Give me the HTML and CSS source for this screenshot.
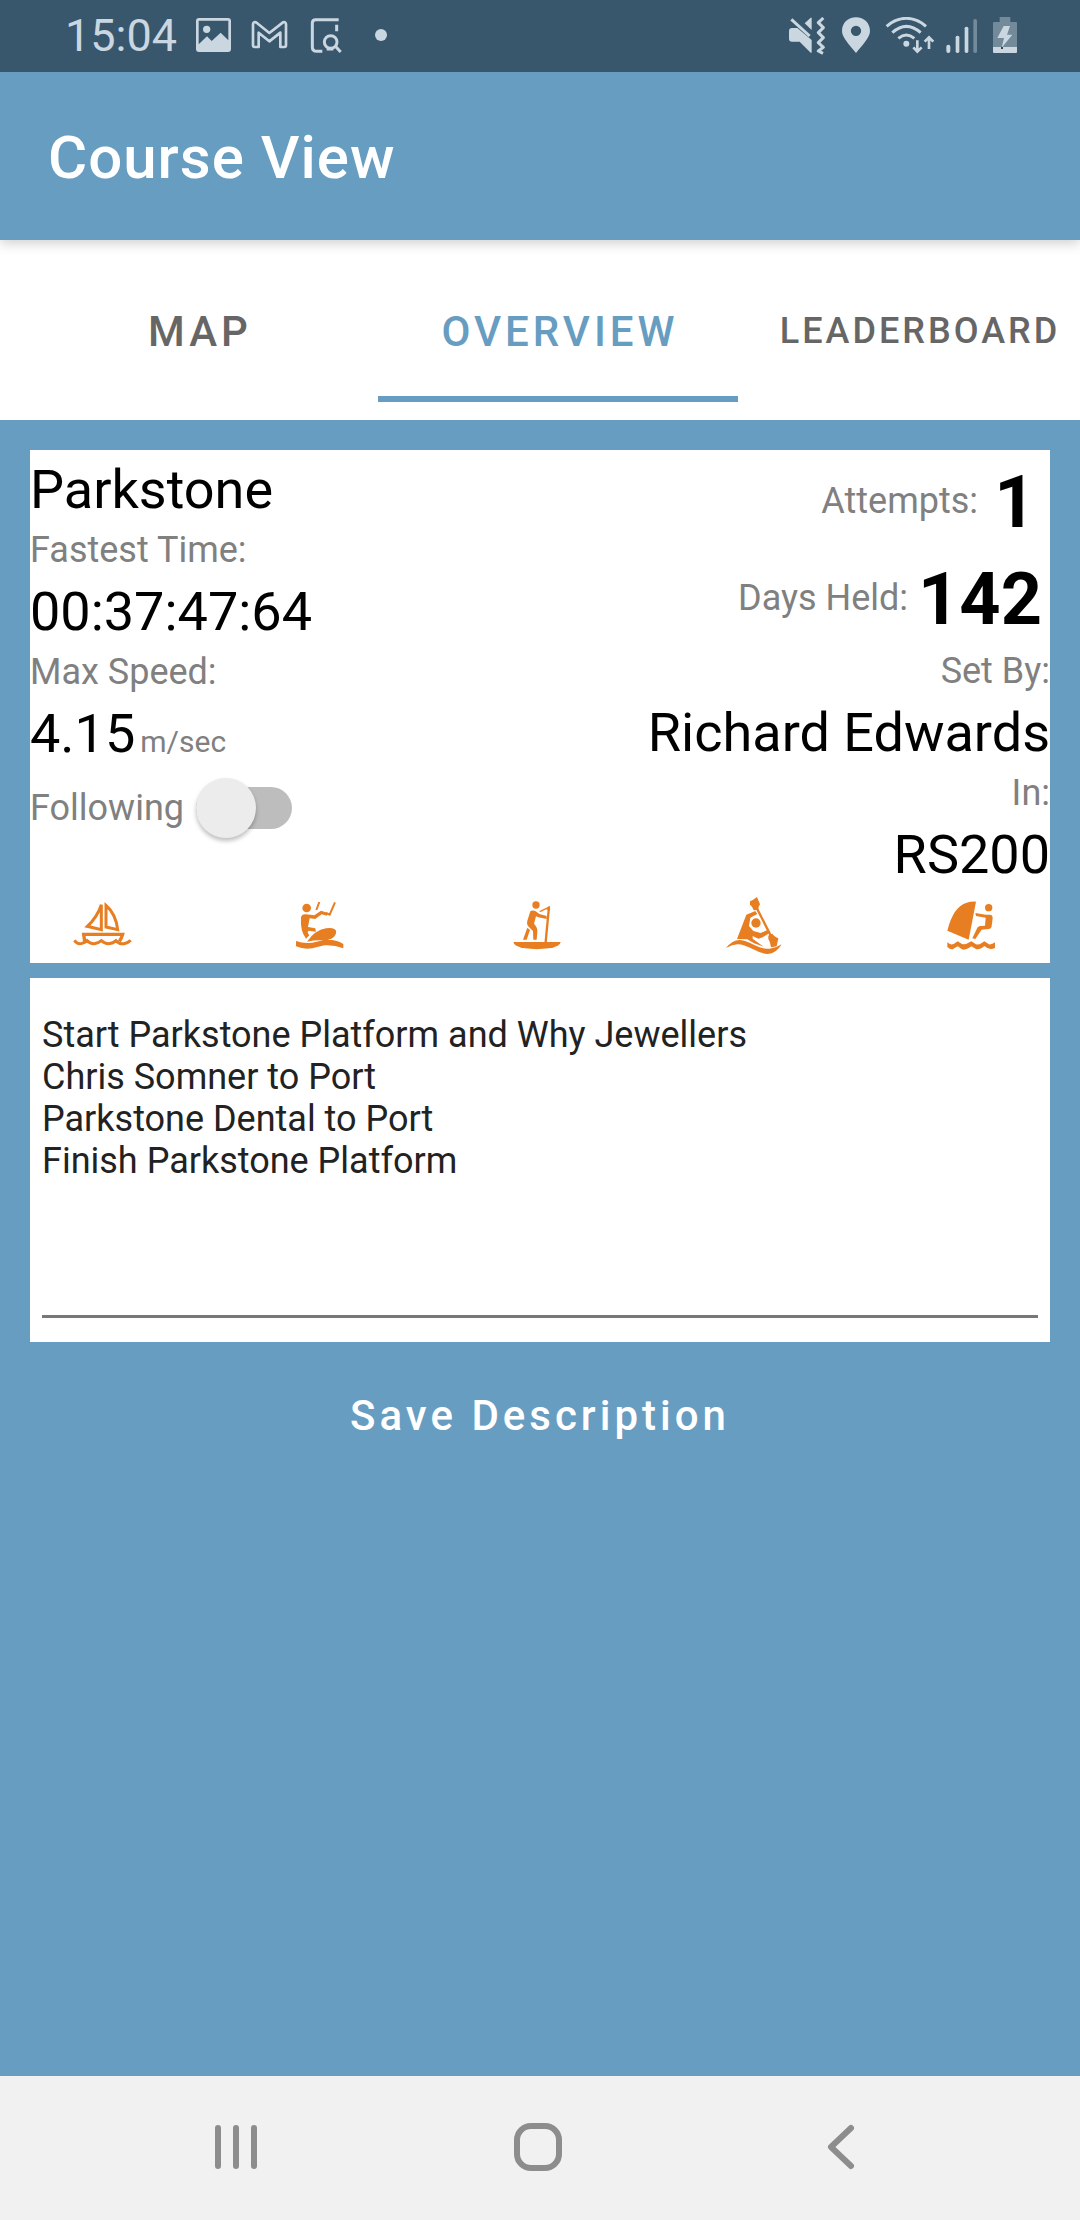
FILE: index.html
```html
<!DOCTYPE html>
<html lang="en">
<head>
<meta charset="utf-8">
<meta name="viewport" content="width=device-width, initial-scale=1">
<title>Course View</title>
<link rel="stylesheet" href="styles.css">
</head>
<body>
<div class="status-bar">
  <div class="status-left">
    <span class="clock">15:04</span>
    <svg class="status-icon" viewBox="582 51 114 114" aria-hidden="true">
      <path fill-rule="evenodd" d="M594 54h87q9 0 9 9v84q0 9-9 9h-87q-9 0-9-9V63q0-9 9-9zM593 62v71l25-24 14 14 27-25 23 23V62z"/>
      <circle cx="617" cy="88" r="11"/>
    </svg>
    <svg class="status-icon" viewBox="753 51 114 114" aria-hidden="true">
      <path class="line" stroke-width="8" stroke-linejoin="round" d="M759 73q0-8 9-6l40 32 41-32q9-2 9 6v63q0 5-5 5h-12V98l-33 26-32-26v43h-12q-5 0-5-5z"/>
    </svg>
    <svg class="status-icon" viewBox="924 51 114 114" aria-hidden="true">
      <path class="line" stroke-width="9" d="M1019 59h-69q-10 0-10 10v72q0 13 13 13h17M1013 74v20"/>
      <circle class="line" stroke-width="9" cx="995" cy="126" r="19"/>
      <path class="line" stroke-width="9" d="M983 147h20M1008 137l17 19"/>
    </svg>
    <svg class="status-icon" viewBox="1095 51 114 114" aria-hidden="true">
      <circle cx="1149" cy="105" r="18"/>
    </svg>
  </div>
  <div class="status-right">
    <svg class="status-icon w42" viewBox="78 51 126 114" aria-hidden="true">
      <path d="M84 93q0-9 9-9h16l43 36v38h-3l-33-33H93q-9 0-9-9zM131 70l18-17h3v37z"/>
      <path class="line" stroke-width="9" d="M91 58l55 50"/>
      <path class="line" stroke-width="9" stroke-linejoin="round" d="M187 54l-15 14 15 15-15 15 15 15-15 15 15 14-15 11 14 7"/>
    </svg>
    <svg class="status-icon" viewBox="228 51 114 114" aria-hidden="true">
      <path fill-rule="evenodd" d="M285 52c24 0 42 17 42 41 0 21-25 44-42 66-17-22-42-45-42-66 0-24 18-41 42-41zm0 25a15 15 0 1 0 0 31 15 15 0 0 0 0-31z"/>
    </svg>
    <svg class="status-icon w52" viewBox="366 51 156 114" aria-hidden="true">
      <path class="line" stroke-width="9" d="M377 79Q404 55 436 55T495 79M394 98q42-38 85 0M412 115q24-20 48 0"/>
      <circle cx="436" cy="131" r="9"/>
      <path class="line" stroke-width="8" d="M469 121v32M457 142l12 13 13-13M504 147v-33M491 125l13-13 13 13"/>
    </svg>
    <svg class="status-icon" viewBox="546 51 114 114" aria-hidden="true">
      <rect x="556" y="134" width="12" height="25" rx="6"/>
      <rect x="584" y="107" width="11" height="52" rx="5"/>
      <rect x="611" y="80" width="11" height="79" rx="5"/>
      <rect x="637" y="57" width="11" height="102" rx="5" opacity=".4"/>
    </svg>
    <svg class="status-icon w32" viewBox="684 51 96 114" aria-hidden="true">
      <path opacity=".4" d="M716 51h32v15h17q3 0 3 3v72h-72V69q0-3 3-3h17z"/>
      <path d="M696 141h72v15q0 3-3 3h-66q-3 0-3-3z"/>
      <path d="M728 78h19l-9 26h16l-32 39 7-29h-20z"/>
      <circle class="dark" cx="723" cy="144" r="3"/>
    </svg>
  </div>
</div>

<header class="app-bar">
  <h1 class="app-title">Course View</h1>
</header>

<nav class="tabs" aria-label="Course sections">
  <button type="button" class="tab">MAP</button>
  <button type="button" class="tab tab-active" aria-current="page">OVERVIEW</button>
  <button type="button" class="tab tab-small">LEADERBOARD</button>
</nav>

<main class="content">
  <section class="card summary">
    <div class="facts">
      <div class="facts-left">
        <div class="value">Parkstone</div>
        <div class="label">Fastest Time:</div>
        <div class="value">00:37:47:64</div>
        <div class="label">Max Speed:</div>
        <div class="value">4.15<span class="unit">m/sec</span></div>
        <div class="follow">
          <label class="label" for="following">Following</label>
          <input class="switch" type="checkbox" role="switch" id="following">
        </div>
      </div>
      <div class="facts-right">
        <div class="stat"><span class="label">Attempts:</span><strong class="count">1</strong></div>
        <div class="stat"><span class="label">Days Held:</span><strong class="count">142</strong></div>
        <div class="label">Set By:</div>
        <div class="value">Richard Edwards</div>
        <div class="label">In:</div>
        <div class="value">RS200</div>
      </div>
    </div>
    <div class="sports">
      <svg class="sport" viewBox="48 33 216 216" role="img" aria-label="Sailing">
        <path class="line" stroke-width="9" d="M154 74v75l-42-10q30-28 42-65zM168 76v65l35 8q-5-47-35-73z"/>
        <path class="line" stroke-width="10" d="M104 184l-3-21h117q-3 11-10 21"/>
        <path class="line" stroke-width="9" d="M73 181q10 13 23 9 10-3 15-8 10 10 22 9 13-2 21-9 10 9 22 9 14-1 22-9 11 12 24 9 13-2 20-10"/>
      </svg>
      <svg class="sport" viewBox="699 33 216 216" role="img" aria-label="Kitesurfing">
        <circle cx="770" cy="84" r="13"/>
        <path d="M753 112q2-10 15-9l25 3 20-14 21 7-3 8-16-4-19 14-17-2-5 26 22 4 2 10-23-3-2 6 5 8-10 10q-18-22-15-64z"/>
        <path class="line" stroke-width="6" d="M808 66l-9 24M855 67l-16 37-11-5"/>
        <path d="M771 185q23-34 57-40 24-4 30 7 3 13-14 24-11 5-25 5-24-1-48 4zM738 183q24 9 49 5l36-8q32-3 57 12v13q-28-11-57-9l-36 9q-26 4-49-6z"/>
      </svg>
      <svg class="sport" viewBox="31 33 216 216" role="img" aria-label="Paddleboarding">
        <circle cx="136" cy="75" r="11"/>
        <path d="M119 94q7-5 16 0l11 8 22 6v9l-25-5-7-3-6 22q11 11 10 24l-2 24h-10l-1-26-13-13q-7-7-4-18zM110 143l8 7-10 29h-11zM145 94l33-16v14l-11-4-17 8z"/>
        <path class="line" stroke-width="7" d="M175 80l-10 106"/>
        <path d="M68 186h142q-1 13-35 19-38 5-72 0-34-6-35-19z"/>
      </svg>
      <svg class="sport" viewBox="683 33 216 216" role="img" aria-label="Kayaking">
        <path class="line" stroke-width="7" d="M796 78l46 90"/>
        <path d="M779 64q10-4 21-13l9 22q-5 7-5 16l-14 2q-5-14-11-16zM834 167q8-6 12-6 3 6 18 14l-5 24-17 3q-2-17-8-25z"/>
        <circle cx="797" cy="129" r="14"/>
        <path d="M768 104l27-11 6 9-21 11-4 25 13 15 22 6 22-10 6 9-22 14-13 4-17-8v8l33 24q-29-8-49-22l-31-1z"/>
        <path d="M707 204q20-25 42-24 17 1 43 15 27 14 46 11 20-2 36-13-16 28-42 29-16 0-45-15-30-15-45-14-16 1-35 11z"/>
      </svg>
      <svg class="sport" viewBox="105 33 216 216" role="img" aria-label="Windsurfing">
        <path d="M228 65l-22 114-64-27q18-73 58-84 14-4 28-3z"/>
        <circle cx="266" cy="83" r="11"/>
        <path d="M226 99l31 5h13q8 1 8 10l-3 24q-1 9-10 9l-20 2-19 28-9-2 15-32q3-4 9-5l14-1 2-24-29-5z"/>
        <path d="M142 187q9 9 19 5l12-8 13 8q10 3 18-3l10-5 14 9q9 2 17-4l8-5 14 9q9 1 18-6v17l-9 3q-11 2-23-9-15 13-25 9l-14-8q-17 13-28 9l-13-9-15 9q-8 1-16-7z"/>
      </svg>
    </div>
  </section>

  <section class="card description">
    <textarea class="description-text" rows="7" aria-label="Course description">Start Parkstone Platform and Why Jewellers
Chris Somner to Port
Parkstone Dental to Port
Finish Parkstone Platform</textarea>
  </section>

  <button type="button" class="save">Save Description</button>
</main>

<nav class="system-nav" aria-label="System navigation">
  <button type="button" class="system-button" aria-label="Recent apps">
    <svg class="system-icon" viewBox="0 0 48 48"><path d="M6 5v38M24 5v38M42 5v38"/></svg>
  </button>
  <button type="button" class="system-button" aria-label="Home">
    <svg class="system-icon" viewBox="0 0 48 48"><rect x="3" y="3" width="42" height="42" rx="14"/></svg>
  </button>
  <button type="button" class="system-button" aria-label="Back">
    <svg class="system-icon" viewBox="0 0 48 48"><path d="M35 5L15 24l20 19"/></svg>
  </button>
</nav>
</body>
</html>
```
FILE: styles.css
```css
:root {
  --blue: #679dc1;
  --status: #38576c;
  --orange: #e77e22;
  --muted: #808080;
}

* {
  box-sizing: border-box;
}

body {
  margin: 0;
  min-height: 100vh;
  display: flex;
  flex-direction: column;
  background: var(--blue);
  color: #000;
  font-family: Roboto, "Liberation Sans", sans-serif;
  overflow-x: hidden;
}

button {
  margin: 0;
  padding: 0;
  border: 0;
  background: none;
  color: inherit;
  font: inherit;
}

/* Status bar */
.status-bar {
  position: relative;
  z-index: 1;
  display: flex;
  justify-content: space-between;
  align-items: center;
  height: 72px;
  padding: 0 59px 0 65px;
  background: var(--status);
  color: #cbd7e0;
}

.status-left {
  display: flex;
  align-items: center;
  gap: 18px;
}

.status-right {
  display: flex;
  align-items: center;
  gap: 8px;
}

.clock {
  font-size: 45px;
  line-height: 72px;
}

.status-icon {
  width: 38px;
  height: 38px;
  fill: currentColor;
}

.w32 { width: 32px; }
.w42 { width: 42px; }
.w52 { width: 52px; }

.line {
  fill: none;
  stroke: currentColor;
}

.dark {
  fill: #111;
}

/* App bar */
.app-bar {
  position: relative;
  display: flex;
  align-items: center;
  height: 168px;
  padding: 4px 48px 0;
  background: var(--blue);
  box-shadow: 0 3px 12px rgba(0, 0, 0, .2);
}

.app-title {
  margin: 0;
  color: #fff;
  font-size: 60px;
  font-weight: 500;
  line-height: 72px;
  letter-spacing: 1px;
}

/* Tabs */
.tabs {
  display: grid;
  grid-template-columns: repeat(3, 1fr);
  height: 180px;
  margin-right: -18px;
  padding-left: 18px;
  background: #fff;
  color: #666;
}

.tab {
  height: 162px;
  padding: 26px 0 0 4px;
  border-bottom: 6px solid transparent;
  font-size: 42px;
  font-weight: 500;
  letter-spacing: 4px;
}

.tab-active {
  border-color: var(--blue);
  color: var(--blue);
}

.tab-small {
  font-size: 36px;
  letter-spacing: 3px;
}

/* Cards */
.content {
  flex: 1;
  display: flex;
  flex-direction: column;
  padding: 30px;
}

.card {
  background: #fff;
}

.facts {
  display: flex;
  justify-content: space-between;
  padding-top: 3px;
}

.facts-right {
  text-align: right;
}

.value {
  font-size: 54px;
  line-height: 73px;
}

.label {
  color: var(--muted);
  font-size: 36px;
  line-height: 49px;
}

.unit {
  margin-left: 5px;
  color: var(--muted);
  font-size: 30px;
  line-height: 30px;
}

.follow {
  display: flex;
  align-items: center;
  gap: 12px;
  height: 76px;
}

.switch {
  appearance: none;
  display: flex;
  align-items: center;
  width: 96px;
  height: 42px;
  margin: 0;
  border-radius: 21px;
  background: #bdbdbd;
}

.switch::before {
  content: "";
  flex: none;
  width: 60px;
  height: 60px;
  border-radius: 50%;
  background: #ececec;
  box-shadow: 0 3px 4px rgba(0, 0, 0, .25);
}

.switch:checked {
  justify-content: flex-end;
}

.stat {
  display: flex;
  justify-content: flex-end;
  align-items: center;
}

.count {
  min-width: 72px;
  padding: 2px 8px 0 10px;
  font-size: 72px;
  font-weight: 700;
  line-height: 95px;
  text-align: center;
}

.sports {
  display: flex;
  justify-content: space-between;
  padding: 0 43px 0 36px;
  color: var(--orange);
}

.sport {
  width: 72px;
  height: 72px;
  fill: currentColor;
}

.sport .line {
  fill: none;
}

.description {
  margin-top: 15px;
  padding: 0 12px 24px;
}

.description-text {
  display: block;
  width: 100%;
  padding: 36px 0 7px;
  border: 0;
  border-bottom: 3px solid #777;
  background: none;
  color: #222;
  font: 36px/42px Roboto, "Liberation Sans", sans-serif;
  resize: none;
  overflow: hidden;
  outline: 0;
}

.save {
  align-self: center;
  height: 144px;
  padding: 2px 48px 0;
  color: #fff;
  font-size: 42px;
  font-weight: 500;
  letter-spacing: 4px;
}

/* System navigation */
.system-nav {
  display: grid;
  grid-template-columns: repeat(3, 1fr);
  height: 144px;
  padding: 0 89px 2px 85px;
  background: #f1f1f1;
}

.system-button {
  display: flex;
  align-items: center;
  justify-content: center;
}

.system-icon {
  width: 48px;
  height: 48px;
  fill: none;
  stroke: #8d8d8d;
  stroke-width: 6;
  stroke-linecap: round;
  stroke-linejoin: round;
}
```
